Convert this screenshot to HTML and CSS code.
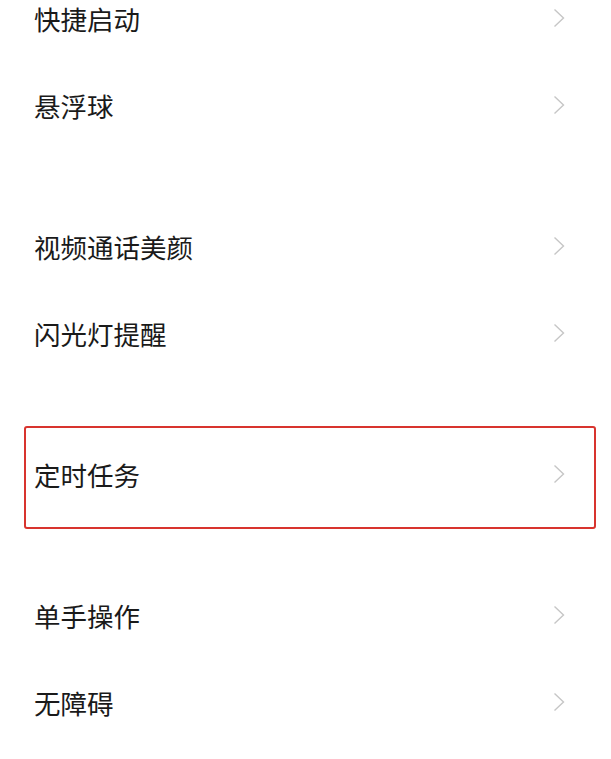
FILE: index.html
```html
<!DOCTYPE html>
<html lang="zh-CN">

<head>
    <meta charset="UTF-8">
    <meta name="viewport" content="width=device-width, initial-scale=1.0">
    <title>更多设置</title>
    <link rel="stylesheet" href="styles.css">
</head>

<body>
    <div class="settings">
        <div class="group">
            <div class="row"><span class="label">快捷启动</span><svg class="chevron" viewBox="0 0 12 20"><polyline points="1.5,1.5 10.5,10 1.5,18.5" /></svg></div>
            <div class="row"><span class="label">悬浮球</span><svg class="chevron" viewBox="0 0 12 20"><polyline points="1.5,1.5 10.5,10 1.5,18.5" /></svg></div>
        </div>

        <div class="group">
            <div class="row"><span class="label">视频通话美颜</span><svg class="chevron" viewBox="0 0 12 20"><polyline points="1.5,1.5 10.5,10 1.5,18.5" /></svg></div>
            <div class="row"><span class="label">闪光灯提醒</span><svg class="chevron" viewBox="0 0 12 20"><polyline points="1.5,1.5 10.5,10 1.5,18.5" /></svg></div>
        </div>

        <div class="group">
            <div class="row marked"><span class="label">定时任务</span><svg class="chevron" viewBox="0 0 12 20"><polyline points="1.5,1.5 10.5,10 1.5,18.5" /></svg></div>
        </div>

        <div class="group">
            <div class="row"><span class="label">单手操作</span><svg class="chevron" viewBox="0 0 12 20"><polyline points="1.5,1.5 10.5,10 1.5,18.5" /></svg></div>
            <div class="row"><span class="label">无障碍</span><svg class="chevron" viewBox="0 0 12 20"><polyline points="1.5,1.5 10.5,10 1.5,18.5" /></svg></div>
        </div>
    </div>
</body>

</html>
```

FILE: styles.css
```css
* {
    margin: 0;
    padding: 0;
    box-sizing: border-box;
}

body {
    background: #ffffff;
    font-family: "Noto Sans CJK SC", "Noto Sans", sans-serif;
    color: #1a1a1a;
    overflow: hidden;
}

.settings {
    display: flex;
    flex-direction: column;
    gap: 54px;
    margin-top: -24px;
}

.row {
    height: 87px;
    display: flex;
    align-items: center;
    justify-content: space-between;
    padding: 0 46px 0 34px;
}

.label {
    font-size: 26.5px;
    line-height: 1;
}

.chevron {
    width: 12px;
    height: 20px;
    margin-top: -3px;
    fill: none;
    stroke: #c6c6c6;
    stroke-width: 1.4;
}

/* red annotation frame around the highlighted item */
.marked {
    position: relative;
}

.marked::after {
    content: "";
    position: absolute;
    top: -6px;
    bottom: -10px;
    left: 24px;
    right: 15px;
    border: 2px solid #d8342e;
    border-radius: 3px;
}
```
